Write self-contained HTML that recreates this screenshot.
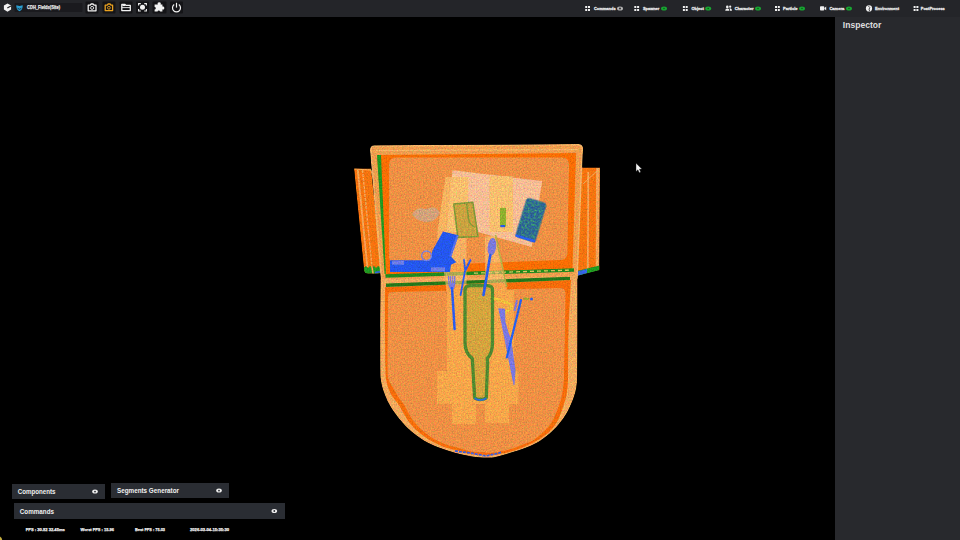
<!DOCTYPE html>
<html><head><meta charset="utf-8">
<style>
*{margin:0;padding:0;box-sizing:border-box}
html,body{width:960px;height:540px;overflow:hidden;background:#000;font-family:"Liberation Sans",sans-serif;color:#e8e8e8}
#top{position:absolute;left:0;top:0;width:960px;height:17px;background:#242529}
#insp{position:absolute;left:834.5px;top:17px;width:125.5px;height:523px;background:#28292d}
.pn{position:absolute;background:#2a2d33;height:15px;font-weight:bold;font-size:6.8px;color:#eee;line-height:15px;padding-left:6px}
svg{position:absolute;left:0;top:0}
</style></head><body>
<div id="top"></div>
<div id="insp"></div>


<div class="pn" style="left:12px;top:484px;width:93px"></div>
<div class="pn" style="left:111px;top:483px;width:118px"></div>
<div class="pn" style="left:14px;top:503px;width:271px;height:16px"></div>

<svg width="960" height="540" viewBox="0 0 960 540">
<!-- BAG -->
<g id="bag">
<defs>
<filter id="speck" x="0" y="0" width="100%" height="100%" color-interpolation-filters="sRGB">
<feTurbulence type="fractalNoise" baseFrequency="0.55" numOctaves="2" seed="5" result="t"/>
<feColorMatrix in="t" type="matrix" values="0 0 0 0 0.25  0 0 0 0 0.66  0 0 0 0 0.42  3.2 0 0 0 -1.35" result="g"/>
<feComposite in="g" in2="SourceGraphic" operator="in" result="gg"/>
<feMerge><feMergeNode in="SourceGraphic"/><feMergeNode in="gg"/></feMerge>
</filter>
<filter id="grain" x="-2%" y="-2%" width="104%" height="104%" color-interpolation-filters="sRGB">
<feTurbulence type="fractalNoise" baseFrequency="0.73 0.67" numOctaves="2" seed="11" result="t"/>
<feColorMatrix in="t" type="matrix" values="1.1 0 0 0 -0.05  0 1.1 0 0 -0.05  0 0 1.1 0 -0.05  0 0 0 0 1" result="g"/>
<feComposite in="SourceGraphic" in2="g" operator="arithmetic" k1="0.5" k2="0.75" k3="0" k4="0" result="m"/>
<feComposite in="m" in2="SourceGraphic" operator="in"/>
</filter>
<clipPath id="paperclip"><path d="M452.5,170.2 L542.2,181 L531.7,247 L478,232 L447,232 Z"/></clipPath>
</defs>
<g filter="url(#grain)">
<!-- left side flap -->
<path d="M354,168.5 L371,168.5 L382,270 Q382,273.5 378,273.5 L368,273.5 Q364.5,273.5 364,270 Z" fill="#f7740f"/>
<path d="M357.8,170 L367.3,267" stroke="#f5a458" stroke-width="1.8" fill="none"/>
<path d="M362.5,170 L372,267" stroke="#f5a458" stroke-width="1.4" stroke-dasharray="3 1" fill="none"/>
<path d="M354.5,169 L371,170 L378,200" stroke="#f6b05e" stroke-width="1" fill="none"/>
<path d="M364,267.5 L366,266 L368,268 L370,266 L372,267.5 L374,266 L376,268 L378,266 L381.6,267.5 L382,270 Q382,273.5 378,273.5 L368,273.5 Q364.5,273.5 364,270 Z" fill="#1f9a22"/>
<path d="M372,267 L373,273.5" stroke="#f5a458" stroke-width="1.6" fill="none"/>
<path d="M375,272.6 L391,269.5" stroke="#3565e0" stroke-width="1.6" fill="none"/>
<!-- right side flap -->
<path d="M578,167.5 L600,167.5 L599.3,270 L577,275.5 Z" fill="#f7740f"/>
<path d="M588.3,172 L587.8,272" stroke="#f5a458" stroke-width="1.8" fill="none"/>
<path d="M597.8,168 L597.4,269" stroke="#f5a458" stroke-width="3.4" fill="none"/>
<path d="M583,184 L599,169" stroke="#f6b05e" stroke-width="1" fill="none"/>
<path d="M577,271 L599.3,265.5 L599.3,270.3 L577,276 Z" fill="#1f9a22"/>
<path d="M577,271.5 L587,269 L587,273 L577,276 Z" fill="#3565e0"/>
<!-- top flap rim -->
<path d="M374.5,146 L578.5,144.7 Q582.3,144.7 582.3,148.5 L577,278 L381.5,280 L370.7,150 Q370.7,146 374.5,146 Z" fill="#f09d4e" stroke="#f7b468" stroke-width="1.5"/>
<path d="M376,150.5 L578,149.5" stroke="#f6b868" stroke-width="1.2" fill="none"/>
<!-- green + bright orange -->
<path d="M377,155 L576,153 L572.5,269 L385.8,276 Z" fill="#fd6e04"/>
<path d="M377,155 L381,155 L385.9,274 L384.6,274 Z" fill="#1f9a22"/>
<!-- inner panel -->
<path d="M396,157.5 L562,157.5 Q569,157.5 569,164.5 L567.5,253 Q567,260 560,260 L470,263.5 L396,263.5 Q389,263.5 389,256.5 L389,164.5 Q389,157.5 396,157.5 Z" fill="#ee9044"/>
<!-- lower bag -->
<path d="M380.5,279.5 C380.4,287.9 380.2,314.9 380.2,330.0 C380.1,345.1 380.1,361.9 380.2,370.0 C380.3,378.1 380.2,375.9 380.6,378.8 C381.0,381.7 381.5,384.7 382.3,387.6 C383.1,390.5 384.3,393.5 385.5,396.4 C386.7,399.3 388.0,402.3 389.7,405.2 C391.4,408.1 393.4,411.1 395.5,414.0 C397.6,416.9 400.0,419.9 402.6,422.8 C405.2,425.7 407.9,428.7 411.4,431.6 C414.9,434.5 419.2,437.8 423.7,440.4 C428.2,443.0 433.5,445.3 438.6,447.4 C443.7,449.4 449.3,451.2 454.5,452.7 C459.7,454.2 465.8,455.4 470.0,456.2 C474.2,457.0 477.0,457.1 480.0,457.4 C483.0,457.7 485.3,457.9 488.0,457.8 C490.7,457.7 492.3,457.8 496.0,457.0 C499.7,456.2 504.9,454.6 510.0,453.0 C515.1,451.4 521.5,449.5 526.6,447.4 C531.7,445.3 536.5,443.0 540.7,440.4 C544.9,437.8 548.8,434.5 552.0,431.6 C555.2,428.7 557.6,425.7 560.0,422.8 C562.4,419.9 564.4,416.9 566.2,414.0 C568.0,411.1 569.3,408.1 570.6,405.2 C571.9,402.3 573.1,399.3 574.1,396.4 C575.1,393.5 575.9,390.5 576.4,387.6 C576.9,384.7 577.0,381.7 577.1,378.8 C577.2,375.9 577.2,378.1 577.3,370.0 C577.4,361.9 577.5,345.7 577.5,330.0 C577.5,314.3 577.5,285.0 577.5,276.0 Z" fill="#f2a95c"/>
<path d="M385.0,287.2 C385.0,294.3 384.9,316.2 385.0,330.0 C385.1,343.8 385.3,361.7 385.5,370.0 C385.7,378.3 385.6,376.7 386.2,380.0 C386.8,383.3 387.8,387.0 389.0,390.0 C390.2,393.0 391.8,395.5 393.5,398.0 C395.2,400.5 397.2,402.5 399.0,405.2 C400.8,407.9 402.2,411.1 404.0,414.0 C405.8,416.9 407.3,419.9 409.6,422.8 C411.9,425.7 414.7,428.7 418.0,431.6 C421.3,434.5 425.3,437.5 429.5,440.0 C433.7,442.5 438.6,444.8 443.0,446.5 C447.4,448.2 451.5,449.1 456.0,450.3 C460.5,451.6 466.0,453.2 470.0,454.0 C474.0,454.8 477.0,454.8 480.0,455.0 C483.0,455.2 485.3,455.4 488.0,455.4 C490.7,455.3 492.3,455.3 496.0,454.7 C499.7,454.1 505.2,453.2 510.0,451.8 C514.8,450.4 520.2,448.6 525.0,446.5 C529.8,444.4 534.9,442.0 539.0,439.5 C543.1,437.0 546.6,434.4 549.5,431.6 C552.4,428.8 554.6,425.7 556.5,422.8 C558.4,419.9 559.4,416.9 560.6,414.0 C561.8,411.1 562.6,408.1 563.5,405.2 C564.4,402.3 565.5,399.3 566.2,396.4 C566.9,393.5 567.2,390.5 567.5,387.6 C567.8,384.7 567.9,381.7 568.0,378.8 C568.1,375.9 567.9,378.1 568.0,370.0 C568.1,361.9 568.0,345.0 568.5,330.0 C569.0,315.0 570.6,288.3 571.0,280.0 Z" fill="#f86c0a"/>
<path d="M388.0,296.0 C388.0,301.7 387.9,317.7 387.8,330.0 C387.7,342.3 387.4,361.7 387.6,370.0 C387.8,378.3 387.9,377.1 388.8,380.0 C389.7,382.9 391.4,384.9 392.9,387.6 C394.4,390.3 396.1,393.5 398.0,396.4 C399.9,399.3 402.5,402.3 404.3,405.2 C406.1,408.1 407.2,411.1 409.0,414.0 C410.8,416.9 412.6,420.0 414.9,422.8 C417.2,425.6 419.8,428.3 423.0,431.0 C426.2,433.7 430.2,436.8 434.0,439.0 C437.8,441.2 442.0,443.1 446.0,444.5 C450.0,445.9 454.0,446.6 458.0,447.7 C462.0,448.8 466.3,450.4 470.0,451.2 C473.7,452.0 477.0,452.1 480.0,452.3 C483.0,452.6 485.3,452.7 488.0,452.7 C490.7,452.7 492.3,452.8 496.0,452.2 C499.7,451.6 505.5,450.5 510.0,449.2 C514.5,447.9 519.2,446.0 523.0,444.5 C526.8,443.0 529.3,442.5 532.8,440.4 C536.3,438.2 540.9,434.5 544.0,431.6 C547.1,428.7 549.3,425.7 551.3,422.8 C553.2,419.9 554.4,416.9 555.7,414.0 C557.0,411.1 558.0,408.1 559.0,405.2 C560.0,402.3 561.1,399.3 561.8,396.4 C562.5,393.5 562.6,390.5 563.0,387.6 C563.4,384.7 563.8,381.7 564.0,378.8 C564.2,375.9 563.8,378.1 564.0,370.0 C564.2,361.9 564.8,342.7 565.0,330.0 C565.2,317.3 565.4,300.0 565.5,294.0 Q565.5,288 561,288 L392,292 Q388,292 388,296 Z" fill="#ee9044"/>
<!-- hinge lines -->
<path d="M385.5,276 L574,270" stroke="#1f8a1e" stroke-width="3.4" fill="none"/>
<path d="M474,273.2 L570,270.1" stroke="#d9c860" stroke-width="1.3" stroke-dasharray="4 3" fill="none"/>
<path d="M386,285.2 L570,278.4" stroke="#24781a" stroke-width="3.4" fill="none"/>
<!-- strips -->
<g fill="#f9b360">
<path d="M445.5,177 L468.5,177 L467,232 L437.5,232 Z"/>
<path d="M489.5,176 L513,176 L513,232 L489.5,232 Z"/>
</g>
<g fill="#ffc272" fill-opacity="0.62">
<path d="M437.5,232 L466.5,232 L466.5,291 L446.5,291 L444,272 L437.5,268 Z"/>
<path d="M485,237 L495.5,235 L506.7,287 L506.7,291 L485,291 Z"/>
</g>
<rect x="447" y="290" width="67" height="81" fill="#f9a64a"/>
<g fill="#f9a64a">
<rect x="437" y="371" width="81.5" height="33"/>
<rect x="452" y="404" width="24" height="20"/>
<rect x="485" y="404" width="24" height="19"/>
</g>
<!-- paper -->
<path d="M452.5,170.2 L542.2,181 L531.7,247 L478,232 L447,232 Z" fill="#f9bd94"/>
<g clip-path="url(#paperclip)" fill="#fbbf6e">
<path d="M445.5,177 L468.5,177 L467,232 L437.5,232 Z"/>
<path d="M489.5,176 L513,176 L513,232 L489.5,232 Z"/>
</g>
<!-- lips -->
<path d="M412,214 Q417,207 423,208.5 Q426,210 429,208 Q436,206 440,213 Q436,221.5 427,222 Q417,222 412,214 Z" fill="#d3a27a"/>
<!-- cup -->
<path d="M453.8,204 L472.8,202.3 L478,236.5 L457.8,237.4 Z" fill="#c9a240" stroke="#7f9a38" stroke-width="1.6" stroke-linejoin="round"/>
<path d="M466.6,203 L468.4,218 Q469,224 474.5,227" fill="none" stroke="#7f9a38" stroke-width="1.4"/>
<!-- battery -->
<rect x="500" y="207.8" width="6" height="19" fill="#8fb02e"/>
<rect x="500.5" y="225" width="4.5" height="2.2" fill="#2a5cf0"/>
<!-- phone -->
<g transform="translate(531,220) rotate(17)"><rect x="-10.5" y="-20.5" width="21" height="41" rx="3.5" fill="#2a5a9c" filter="url(#speck)"/><rect x="-10.5" y="18" width="21" height="2.5" rx="1" fill="#2a5cf0"/></g>
<!-- olive stick -->
<path d="M495.5,235 L506.7,287" stroke="#b3ad45" stroke-width="1.6" fill="none"/>
<!-- gun -->
<path d="M390,260.2 L430,260.2 L432.5,250.5 L443,231.6 L458.4,235.2 L451,256.6 L456.3,262.2 L451,264.7 L450,272 L390,272 Z" fill="#2457ee"/>
<circle cx="426.5" cy="255.8" r="4.8" fill="#ee9044" stroke="#7482e4" stroke-width="1.4"/>
<rect x="392" y="260.7" width="12" height="4" fill="#6c7de6"/>
<rect x="431" y="267.3" width="14" height="4.2" fill="#6c7de6"/>
<path d="M457.6,235.5 L450.5,256.5" stroke="#5a73e8" stroke-width="2" fill="none"/>
<!-- bottle -->
<path d="M470,285.7 L487.5,285.7 Q492.5,285.7 492.5,290.5 L492.5,343 Q492.5,353 487.3,358.5 L487.6,362 L486.3,398 Q480.5,401 474.6,398 L472.5,362 L472.3,358.5 Q465,353 465,343 L465,290.5 Q465,285.7 470,285.7 Z" fill="#d4a43e" stroke="#4f8a30" stroke-width="3.3" stroke-linejoin="round"/>
<path d="M474.6,398.3 Q480.5,401.8 486.3,398.3" stroke="#2a6ae0" stroke-width="1.6" fill="none"/>
<!-- spoon -->
<ellipse cx="491.9" cy="246.8" rx="4.2" ry="8.8" transform="rotate(8 491.9 246.8)" fill="#7a78dc"/>
<path d="M490.3,255 L483.5,295" stroke="#2a5cf0" stroke-width="2.6" stroke-linecap="round" fill="none"/>
<!-- tweezers -->
<path d="M464,260 L465.2,270 L460.6,295 M470.5,260 L465.2,271" stroke="#2a5cf0" stroke-width="1.8" stroke-linecap="round" fill="none"/>
<!-- fork -->
<path d="M448.5,276 L449,284 Q449.5,288 451.5,289 L452.3,289 Q454.3,288 454.6,284 L454.8,276 M450.6,276 V284 M452.7,276 V284" stroke="#7a78dc" stroke-width="1.3" fill="none"/>
<path d="M450,283 H454 V289 H450 Z" fill="#7a78dc"/>
<path d="M452,288 L454.6,329" stroke="#2a5cf0" stroke-width="2.5" stroke-linecap="round" fill="none"/>
<!-- opener -->
<path d="M494,298 L510,304 Q513,306 510,309 L504.5,313" stroke="#f0c43c" stroke-width="2.6" fill="none" stroke-linejoin="round"/>
<!-- knife -->
<path d="M498.3,308.3 L505,308.8 L505.5,322 L509,334 L511,338 L515.5,370 L514.5,385 L513.5,385 Z" fill="#7a78e0"/>
<path d="M521,300 L506.8,357.5" stroke="#2460f0" stroke-width="2.2" stroke-linecap="round" fill="none"/>
<path d="M517,300 L514.5,311" stroke="#7a78e0" stroke-width="2" fill="none"/>
<path d="M523.5,298.8 H529" stroke="#8fb02e" stroke-width="2" fill="none"/>
<circle cx="531.5" cy="299" r="1.5" fill="#2a5cf0"/>
<!-- zipper -->
<path d="M455,451 L470,453 L486,456 L501,452.5" stroke="#3c5fe0" stroke-width="1.8" fill="none" stroke-dasharray="3 1"/>
</g>
</g>
<!-- ICONS -->
<g id="icons">
<g font-family="Liberation Sans, sans-serif" font-weight="bold" fill="#e9e9e9">
<!-- logo -->
<path d="M7.5,3.4 L11.1,5.4 L11.1,9.6 L7.5,11.7 L3.9,9.6 L3.9,5.4 Z" fill="#f2f2f2"/>
<path d="M7.3,8 L10.9,5.9" stroke="#232427" stroke-width="1.1" fill="none"/>
<!-- input box -->
<rect x="14.5" y="3" width="68" height="9" rx="1" fill="#1a1a1e"/>
<path d="M16.3,5.2 L19.5,6 L22.7,5.2 Q23,9.6 19.5,11.2 Q16,9.6 16.3,5.2 Z" fill="#2a9fd2"/>
<path d="M17.6,8.3 Q19.5,10.2 21.4,8.3" stroke="#1a1a1e" stroke-width="0.8" fill="none"/>
<text x="27" y="9.3" font-size="5" stroke="#e9e9e9" stroke-width="0.25" textLength="33" lengthAdjust="spacingAndGlyphs">CDH_Fields(Site)</text>
<!-- icon boxes -->
<g fill="#141417">
<rect x="85.5" y="1.5" width="13" height="12" rx="1"/>
<rect x="102.5" y="1.5" width="13" height="12" rx="1"/>
<rect x="119.5" y="1.5" width="13" height="12" rx="1"/>
<rect x="136" y="1.5" width="13" height="12" rx="1"/>
<rect x="152.5" y="1.5" width="14" height="12" rx="1"/>
<rect x="170" y="1.5" width="13" height="12" rx="1"/>
</g>
<!-- camera 1 -->
<g fill="none" stroke="#f2f2f2" stroke-width="1.3" stroke-linejoin="round">
<path d="M88.2,5.2 H90.2 L91,4 H93.2 L94,5.2 H96 V10.8 H88.2 Z"/>
</g>
<circle cx="92.1" cy="7.9" r="1.5" fill="none" stroke="#f2f2f2" stroke-width="0.9"/>
<!-- camera 2 orange -->
<g fill="none" stroke="#e9a11f" stroke-width="1.3" stroke-linejoin="round">
<path d="M105.2,5.2 H107.2 L108,4 H110.2 L111,5.2 H112.6 V10.6 H105.2 Z"/>
</g>
<circle cx="108.9" cy="7.8" r="1.4" fill="none" stroke="#e9a11f" stroke-width="0.9"/>
<!-- folder -->
<path d="M121.8,4.5 H125 L125.8,5.4 H130.3 V10.6 H121.8 Z" fill="none" stroke="#f2f2f2" stroke-width="1.3" stroke-linejoin="round"/>
<path d="M122.5,5.4 H125" stroke="#f2f2f2" stroke-width="1.4" fill="none"/>
<path d="M122,7.6 H130" stroke="#f2f2f2" stroke-width="0.9" fill="none"/>
<!-- focus -->
<g fill="none" stroke="#eeeeee" stroke-width="1.1">
<path d="M138.6,5.6 V3.6 H140.8 M144.2,3.6 H146.4 V5.6 M146.4,9 V11 H144.2 M140.8,11 H138.6 V9"/>
</g>
<circle cx="142.5" cy="7.3" r="2.5" fill="#f2f2f2"/>
<!-- puzzle -->
<path d="M157.8,4.4 A1.5,1.5 0 1 1 160.6,4.4 L162.4,4.4 V6.6 A1.4,1.4 0 1 1 162.4,9.2 V11.6 H160 A1.2,1.2 0 1 0 157.6,11.6 H154.6 V9.4 A1.2,1.2 0 1 0 154.6,7 V4.4 Z" fill="#f2f2f2"/>
<!-- power -->
<path d="M174.2,4.6 A4,4 0 1 0 178.8,4.6" fill="none" stroke="#f2f2f2" stroke-width="1.2"/>
<path d="M176.5,2.8 V7.6" stroke="#f2f2f2" stroke-width="1.2" fill="none"/>

<!-- right side items -->
<g id="grid" fill="#f0f0f0">
<path d="M585.2,6.1h2v2h-2z M588,6.1h2v2h-2z M585.2,8.9h2v2h-2z M588,8.9h2v2h-2z"/>
<path d="M634.3,6.1h2v2h-2z M637.1,6.1h2v2h-2z M634.3,8.9h2v2h-2z M637.1,8.9h2v2h-2z"/>
<path d="M682.9,6.1h2v2h-2z M685.7,6.1h2v2h-2z M682.9,8.9h2v2h-2z M685.7,8.9h2v2h-2z"/>
<path d="M775,6.1h2v2h-2z M777.8,6.1h2v2h-2z M775,8.9h2v2h-2z M777.8,8.9h2v2h-2z"/>
<path d="M913.6,6.1h2v2h-2z M916.4,6.1h2v2h-2z M913.6,8.9h2v2h-2z M916.4,8.9h2v2h-2z"/>
</g>
<!-- people -->
<g fill="#f0f0f0">
<circle cx="727.3" cy="6.9" r="1.3"/><path d="M725.2,10.8 Q725.2,8.4 727.3,8.4 Q729.4,8.4 729.4,10.8 Z"/>
<circle cx="730.2" cy="6.7" r="1.1"/><path d="M729.6,8.3 Q732,8 732,10.8 H730 Q730,9 729.6,8.3 Z"/>
<!-- video camera -->
<rect x="820" y="6.2" width="4.2" height="4.4" rx="0.8"/><path d="M824.4,8 L826.2,6.6 V10.2 L824.4,8.9 Z"/>
<!-- globe -->
<circle cx="869" cy="8.4" r="3.1"/>
</g>
<path d="M868.2,5.8 Q870.8,7.6 869.2,9 Q868.6,10 869.8,11" stroke="#232427" stroke-width="0.8" fill="none"/>
<!-- eyes -->
<g>
<ellipse cx="620" cy="8.5" rx="3" ry="2" fill="#b4b4b4"/><circle cx="620" cy="8.5" r="0.9" fill="#232427"/>
<g fill="#18a532">
<ellipse cx="664" cy="8.5" rx="3" ry="2.1"/><ellipse cx="708.2" cy="8.5" rx="3" ry="2.1"/><ellipse cx="758" cy="8.5" rx="3" ry="2.1"/><ellipse cx="802" cy="8.5" rx="3" ry="2.1"/><ellipse cx="849" cy="8.5" rx="3" ry="2.1"/>
</g>
<g fill="#0b5a18"><circle cx="664" cy="8.5" r="0.8"/><circle cx="708.2" cy="8.5" r="0.8"/><circle cx="758" cy="8.5" r="0.8"/><circle cx="802" cy="8.5" r="0.8"/><circle cx="849" cy="8.5" r="0.8"/></g>
</g>
<g font-size="4.2" stroke="#e9e9e9" stroke-width="0.28">
<text x="594" y="10" textLength="21.6" lengthAdjust="spacingAndGlyphs">Commands</text>
<text x="643" y="10" textLength="16.3" lengthAdjust="spacingAndGlyphs">Spawner</text>
<text x="691.4" y="10" textLength="12.4" lengthAdjust="spacingAndGlyphs">Object</text>
<text x="734.7" y="10" textLength="18.8" lengthAdjust="spacingAndGlyphs">Character</text>
<text x="783" y="10" textLength="14.6" lengthAdjust="spacingAndGlyphs">Particle</text>
<text x="829.4" y="10" textLength="15" lengthAdjust="spacingAndGlyphs">Camera</text>
<text x="875" y="10" textLength="24" lengthAdjust="spacingAndGlyphs">Environment</text>
<text x="920.8" y="10" textLength="24" lengthAdjust="spacingAndGlyphs">PostProcess</text>
</g>
<!-- bottom panels text -->
<g font-size="6.8" fill="#f0f0f0">
<text x="17.8" y="494.2" textLength="37.7" lengthAdjust="spacingAndGlyphs">Components</text>
<text x="117" y="493.2" textLength="62" lengthAdjust="spacingAndGlyphs">Segments Generator</text>
<text x="19.8" y="513.5" textLength="34.2" lengthAdjust="spacingAndGlyphs">Commands</text>
</g>
<g font-size="4.4" fill="#f0f0f0" stroke="#f0f0f0" stroke-width="0.25">
<text x="25.8" y="531" textLength="39" lengthAdjust="spacingAndGlyphs">FPS : 30.82 32.45ms</text>
<text x="80.5" y="531" textLength="33.5" lengthAdjust="spacingAndGlyphs">Worst FPS : 15.96</text>
<text x="135" y="531" textLength="30" lengthAdjust="spacingAndGlyphs">Best FPS : 75.03</text>
<text x="190" y="531" textLength="39" lengthAdjust="spacingAndGlyphs">2026-03-04-15:35:30</text>
</g>
<!-- panel eyes -->
<g fill="#eeeeee">
<ellipse cx="95" cy="491.6" rx="2.8" ry="2"/><ellipse cx="219" cy="490.6" rx="2.8" ry="2"/><ellipse cx="274.3" cy="511" rx="2.8" ry="2"/>
</g>
<g fill="#2a2d33"><circle cx="95" cy="491.6" r="0.9"/><circle cx="219" cy="490.6" r="0.9"/><circle cx="274.3" cy="511" r="0.9"/></g>
<text x="842.8" y="28" font-size="9.6" fill="#dedede" textLength="38.5" lengthAdjust="spacingAndGlyphs">Inspector</text>
<!-- cursor -->
<path d="M636,163.2 L636,171.6 L637.9,169.8 L639.3,172.7 L640.7,172.1 L639.4,169.2 L641.9,169 Z" fill="#f4f4f4" stroke="#111" stroke-width="0.4"/>
<!-- corner -->
<path d="M0,536.5 Q2,537.5 2.2,540 L0,540 Z" fill="#c8b040"/>
</g>
</g>
</svg>
</body></html>
